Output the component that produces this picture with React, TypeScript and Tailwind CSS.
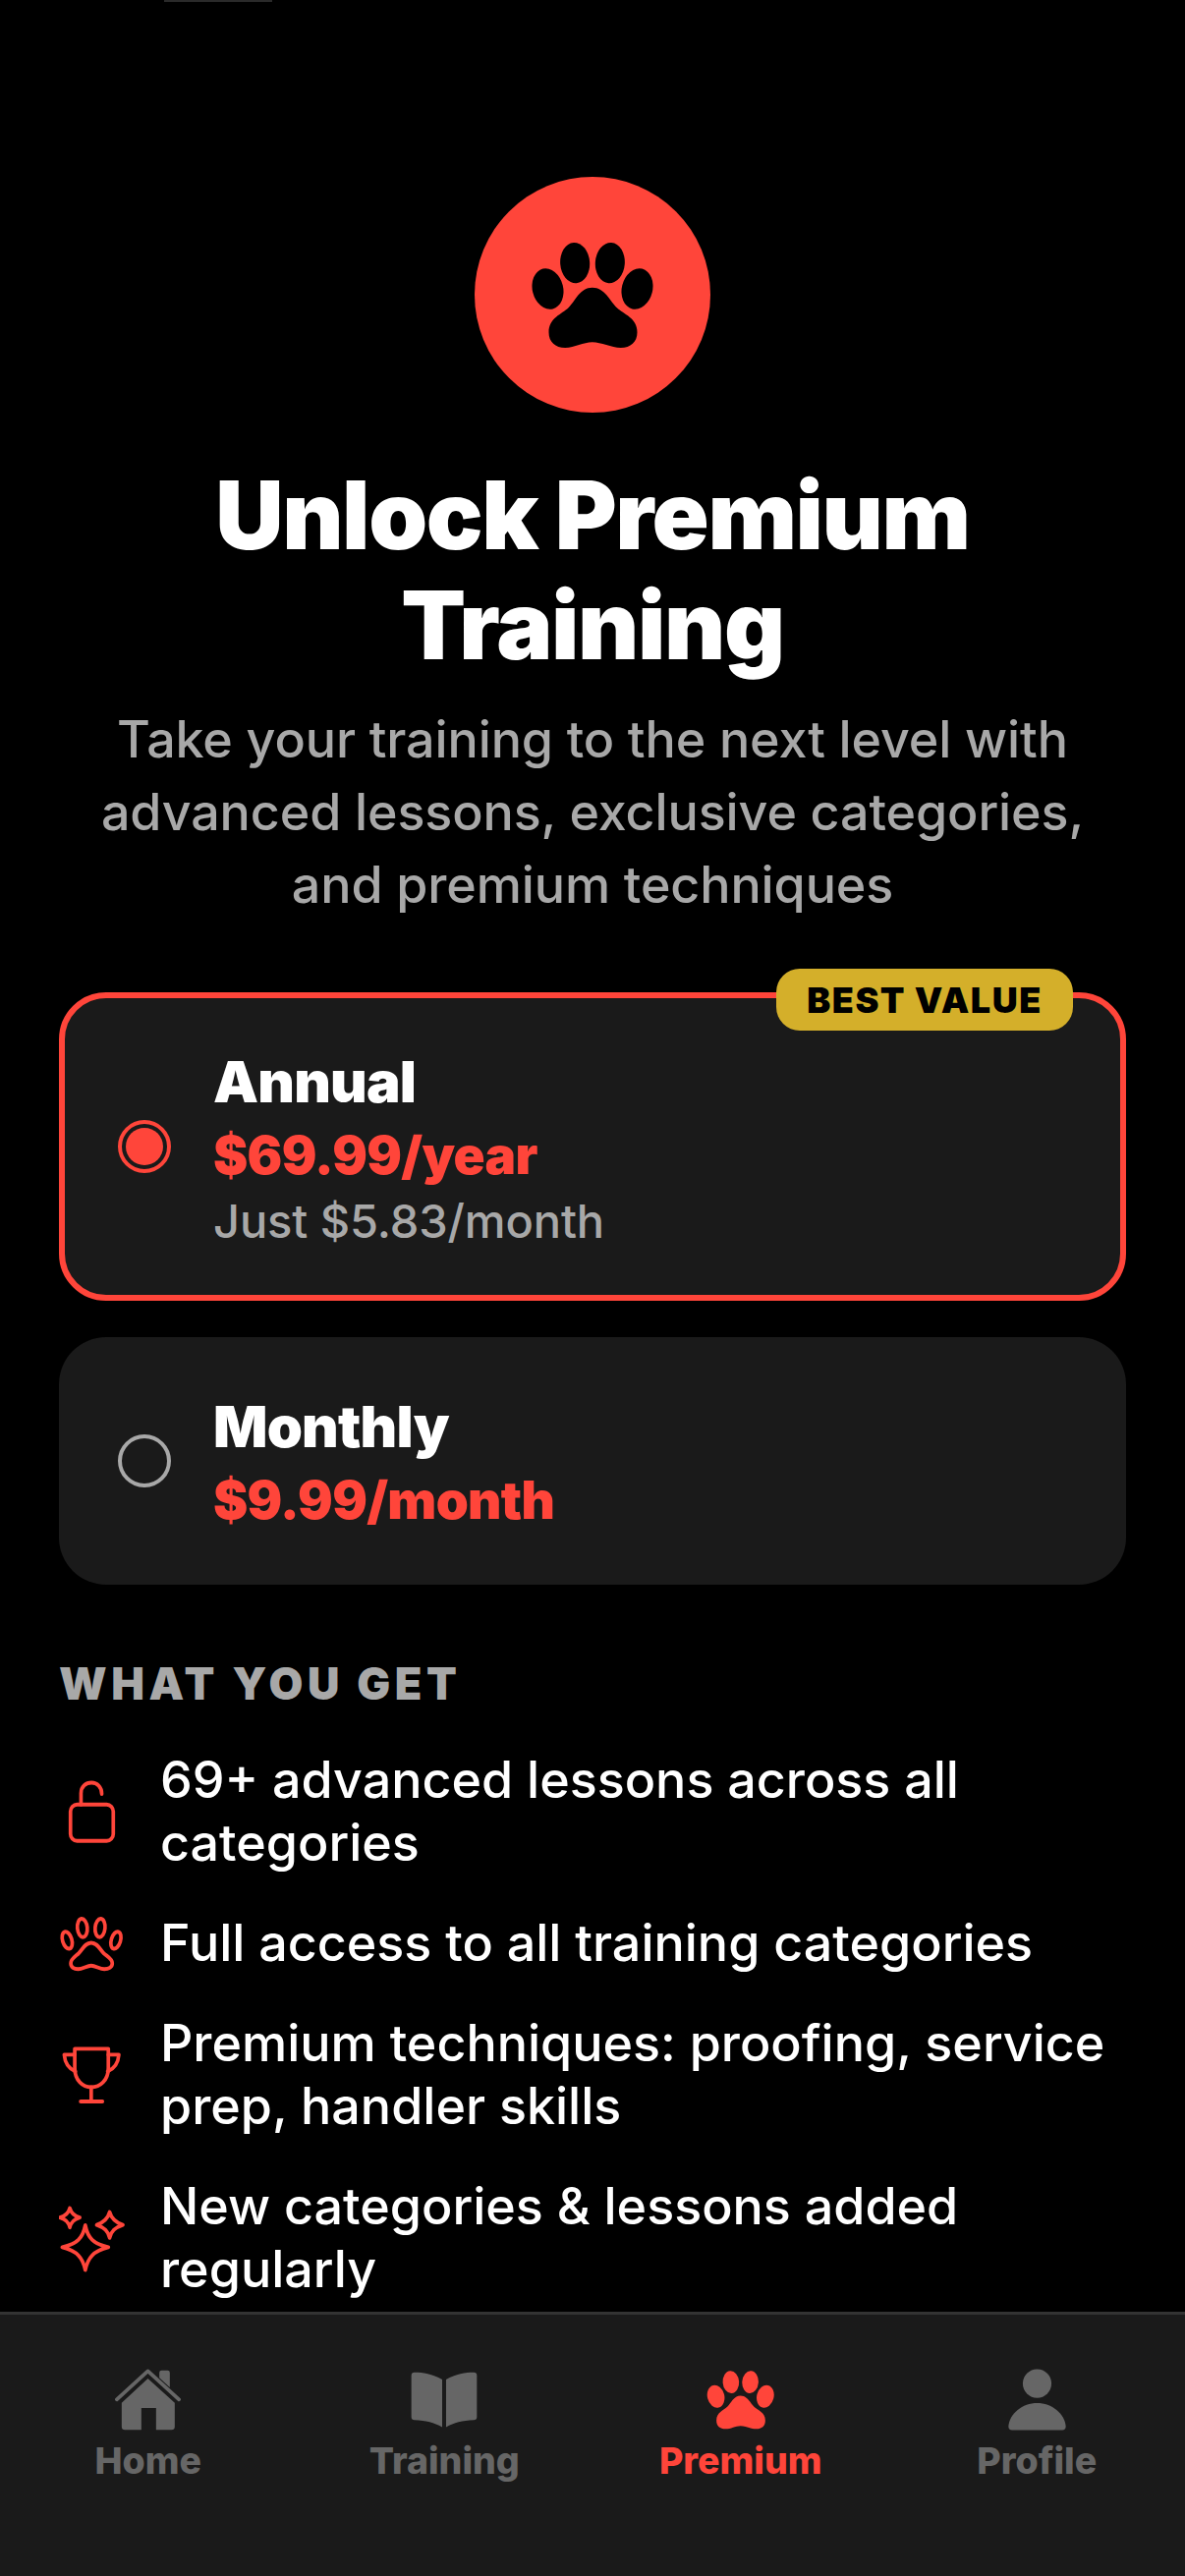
import React from 'react';

const Paw = ({ className }: { className: string }) => (
  <svg viewBox="420 285 380 330" className={className} fill="currentColor">
    <ellipse cx="555" cy="353" rx="45" ry="62" transform="rotate(-4 555 353)" />
    <ellipse cx="662" cy="353" rx="45" ry="62" transform="rotate(4 662 353)" />
    <ellipse cx="472" cy="432" rx="47" ry="63" transform="rotate(-14 472 432)" />
    <ellipse cx="745" cy="432" rx="47" ry="63" transform="rotate(14 745 432)" />
    <path d="M608 428C570 428 555 470 535 490C515 510 475 520 475 565C475 595 495 612 525 612C555 612 580 595 608 595C636 595 665 612 695 612C725 612 745 595 745 565C745 520 703 510 683 490C663 470 646 428 608 428Z" />
  </svg>
);

const LockIcon = () => (
  <svg viewBox="60 85 200 185" preserveAspectRatio="none" className="w-[67px] h-[66px]" fill="none" stroke="currentColor" strokeWidth="11" strokeLinecap="round" strokeLinejoin="round">
    <rect x="95" y="157" width="130" height="104" rx="20" />
    <path d="M127 157V125C127 105 142 95 159 95C176 95 190 107 190 127" />
  </svg>
);

const PawOutlineIcon = () => (
  <svg viewBox="60 470 200 170" preserveAspectRatio="none" className="w-[67px] h-[61px]" fill="none" stroke="currentColor" strokeWidth="11" strokeLinecap="round" strokeLinejoin="round">
    <ellipse cx="131" cy="510" rx="15" ry="26" transform="rotate(-6 131 510)" />
    <ellipse cx="185" cy="510" rx="15" ry="26" transform="rotate(6 185 510)" />
    <ellipse cx="85" cy="545" rx="14" ry="25" transform="rotate(-18 85 545)" />
    <ellipse cx="233" cy="545" rx="14" ry="25" transform="rotate(18 233 545)" />
    <path d="M158 552C140 552 132 570 120 582C108 592 96 598 96 610C96 622 106 627 118 627C132 627 145 617 158 617C171 617 184 627 198 627C210 627 222 622 222 610C222 598 208 592 196 582C184 570 176 552 158 552Z" />
  </svg>
);

const TrophyIcon = () => (
  <svg viewBox="60 840 200 180" preserveAspectRatio="none" className="w-[67px] h-[64px]" fill="none" stroke="currentColor" strokeWidth="11" strokeLinecap="round" strokeLinejoin="round">
    <path d="M108 855H210V910C210 945 185 965 158 965C132 965 108 945 108 910Z" />
    <path d="M108 872H76C78 895 90 912 110 920" />
    <path d="M210 872H242C240 895 228 912 208 920" />
    <path d="M158 965V1006" />
    <path d="M126 1006H192" />
  </svg>
);

const SparklesIcon = () => (
  <svg viewBox="60 1290 200 200" preserveAspectRatio="none" className="w-[67px] h-[71px]" fill="none" stroke="currentColor" strokeWidth="11" strokeLinejoin="round">
    <path d="M140 1352C148 1390 165 1405 210 1415C165 1425 148 1445 140 1480C132 1445 115 1425 70 1415C115 1405 132 1390 140 1352Z" />
    <path d="M93 1303C97 1318 105 1325 123 1330C105 1335 97 1342 93 1358C89 1342 81 1335 63 1330C81 1325 89 1318 93 1303Z" />
    <path d="M214 1314C219 1332 230 1343 254 1351C230 1359 219 1368 214 1388C209 1368 198 1359 175 1351C198 1343 209 1332 214 1314Z" />
  </svg>
);

const HomeIcon = () => (
  <svg viewBox="80 45 200 195" className="w-[67px] h-[65px]" fill="currentColor">
    <path d="M85 142L180 55L275 142" fill="none" stroke="currentColor" strokeWidth="11" strokeLinecap="round" strokeLinejoin="round" />
    <path d="M215 60Q215 53 222 53H240Q247 53 247 60V105L215 76Z" />
    <path d="M180 78L262 152V225Q262 235 252 235H205V168H160V235H110Q100 235 100 225V152Z" />
  </svg>
);

const BookIcon = () => (
  <svg viewBox="980 48 212 178" className="w-[70px] h-[59px]" fill="currentColor">
    <path d="M1080 75C1050 58 1020 53 995 53Q985 53 985 63V190Q985 200 995 200C1030 202 1055 207 1080 222Z" />
    <path d="M1092 75C1122 58 1152 53 1177 53Q1187 53 1187 63V190Q1187 200 1177 200C1142 202 1117 207 1092 222Z" />
  </svg>
);

const PersonIcon = () => (
  <svg viewBox="1000 45 190 195" className="w-[63px] h-[65px]" fill="currentColor">
    <circle cx="1095" cy="93" r="44" />
    <path d="M1007 225C1010 185 1050 153 1095 153C1140 153 1180 185 1183 225Q1183 236 1172 236H1018Q1007 236 1007 225Z" />
  </svg>
);

const FEATURES = [
  { icon: <LockIcon />, text: '69+ advanced lessons across all categories' },
  { icon: <PawOutlineIcon />, text: 'Full access to all training categories' },
  { icon: <TrophyIcon />, text: 'Premium techniques: proofing, service prep, handler skills' },
  { icon: <SparklesIcon />, text: 'New categories & lessons added regularly' },
];

const TABS = [
  { label: 'Home', icon: <HomeIcon /> },
  { label: 'Training', icon: <BookIcon /> },
  { label: 'Premium', icon: <Paw className="w-[70px] h-[61px]" />, active: true },
  { label: 'Profile', icon: <PersonIcon /> },
];

export default function App() {
  return (
    <div className="relative h-[2622px] w-[1206px] flex flex-col overflow-hidden bg-black text-white font-['Inter',sans-serif]">
      {/* status bar remnant */}
      <div className="absolute top-0 left-[167px] w-[110px] h-[2px] bg-[#2a2a2a]" />

      <main className="flex-1 min-h-0 overflow-hidden px-[60px] pt-[180px]">
        {/* Hero */}
        <div className="flex flex-col items-center text-center">
          <div className="w-[240px] h-[240px] rounded-full bg-[#ff453a] flex items-center justify-center text-black">
            <Paw className="w-[127px] h-[110px]" />
          </div>
          <h1 className="mt-[48px] text-[96px] leading-[112px] font-black tracking-[-1.4px]">
            Unlock Premium
            <br />
            Training
          </h1>
          <p className="mt-[24px] text-[52px] leading-[74px] font-medium tracking-[-0.1px] text-[#a8a8a8]">
            Take your training to the next level with
            <br />
            advanced lessons, exclusive categories,
            <br />
            and premium techniques
          </p>
        </div>

        {/* Plans */}
        <div className="mt-[72px] relative h-[314px] rounded-[48px] border-[6px] border-[#ff453a] bg-[#1a1a1a] flex items-center pl-[54px] gap-[43px]">
          <div className="absolute -top-[30px] right-[48px] w-[302px] h-[63px] rounded-[24px] bg-[#d4af2a] flex items-center justify-center text-black text-[36px] font-black tracking-[1.5px]">
            BEST VALUE
          </div>
          <div className="w-[54px] h-[54px] shrink-0 rounded-full border-[4px] border-[#ff453a] flex items-center justify-center">
            <div className="w-[38px] h-[38px] rounded-full bg-[#ff453a]" />
          </div>
          <div className="pt-[2px]">
            <div className="text-[58px] leading-[78px] font-black tracking-[-0.8px]">Annual</div>
            <div className="text-[53px] leading-[72px] font-black tracking-[-0.7px] text-[#ff453a]">$69.99/year</div>
            <div className="text-[47px] leading-[62px] font-medium tracking-[-0.1px] text-[#a8a8a8]">Just $5.83/month</div>
          </div>
        </div>

        <div className="mt-[37px] h-[252px] rounded-[48px] border-[6px] border-transparent bg-[#1a1a1a] flex items-center pl-[54px] gap-[43px]">
          <div className="w-[54px] h-[54px] shrink-0 rounded-full border-[4px] border-[#a8a8a8]" />
          <div className="pt-[2px]">
            <div className="text-[58px] leading-[78px] font-black tracking-[-0.8px]">Monthly</div>
            <div className="text-[53px] leading-[72px] font-black tracking-[-0.7px] text-[#ff453a]">$9.99/month</div>
          </div>
        </div>

        {/* Features */}
        <h2 className="mt-[76px] text-[45px] leading-[50px] font-black tracking-[4.5px] text-[#a8a8a8]">WHAT YOU GET</h2>
        <ul className="mt-[41px] flex flex-col gap-[38px]">
          {FEATURES.map((f) => (
            <li key={f.text} className="flex items-center gap-[36px]">
              <div className="w-[67px] shrink-0 flex justify-center text-[#ff453a]">{f.icon}</div>
              <div className="text-[52px] leading-[64px] font-medium">{f.text}</div>
            </li>
          ))}
        </ul>
      </main>

      {/* Tab bar */}
      <nav className="h-[269px] shrink-0 border-t-[3px] border-[#333333] bg-[#1a1a1a] grid grid-cols-4 pt-[53px]">
        {TABS.map((t) => (
          <div key={t.label} className={`flex flex-col items-center ${t.active ? 'text-[#ff453a]' : 'text-[#666666]'}`}>
            <div className="h-[66px] flex items-center justify-center">{t.icon}</div>
            <div className="mt-[8px] text-[37.5px] leading-[44px] font-extrabold">{t.label}</div>
          </div>
        ))}
      </nav>
    </div>
  );
}
